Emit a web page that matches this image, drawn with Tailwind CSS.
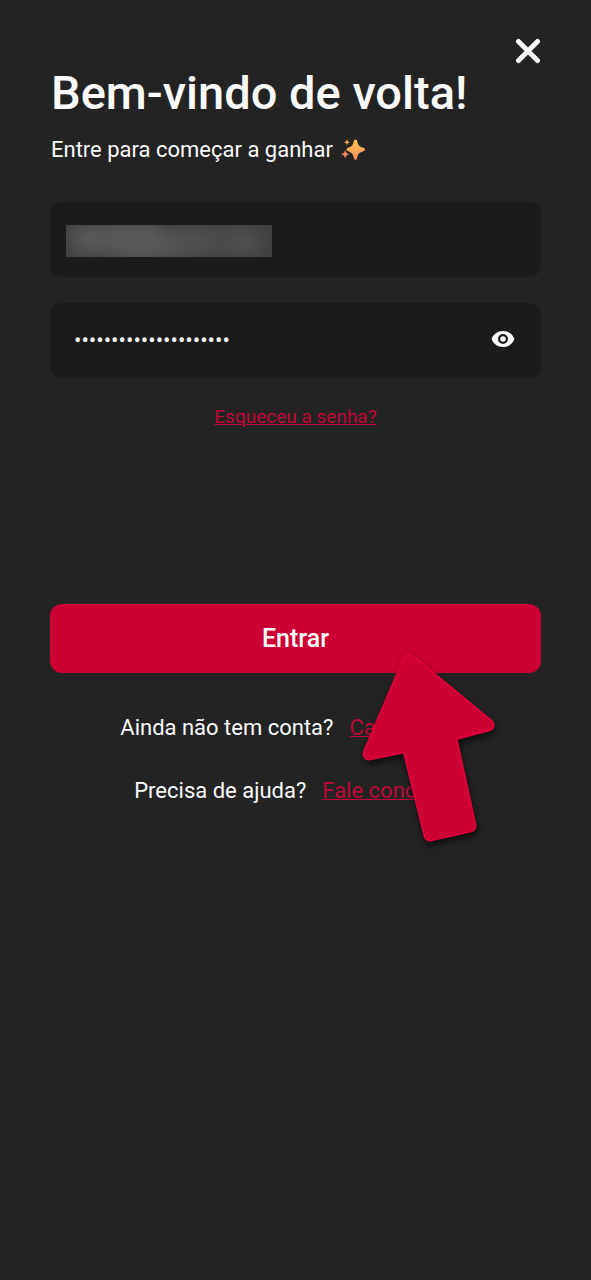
<!DOCTYPE html>
<html lang="pt-BR">
<head>
  <meta charset="UTF-8">
  <meta name="viewport" content="width=device-width, initial-scale=1.0">
  <title>Entrar</title>
  <script src="https://cdn.jsdelivr.net/npm/@tailwindcss/browser@4"></script>
</head>
<body class="bg-[#232323] text-[#fafafa] font-[Roboto,sans-serif]">
  <main class="min-h-screen px-[50px] pt-9">
    <header>
      <div class="flex justify-end">
        <button type="button" aria-label="Fechar" class="py-[2px]">
          <svg class="w-[26px] h-[26px]" viewBox="0 0 26 26" fill="none" stroke="currentColor" stroke-width="5" stroke-linecap="round">
            <path d="M3.5 3.5l19 19M22.5 3.5l-19 19" />
          </svg>
        </button>
      </div>
      <h1 class="pl-px text-[47px] leading-[54px] font-medium">Bem-vindo de volta!</h1>
      <p class="mt-[15px] pl-px flex items-center gap-2 text-[22px] leading-[30px]">
        Entre para começar a ganhar
        <svg class="w-6 h-6" viewBox="0 0 24 24" aria-hidden="true">
          <defs>
            <linearGradient id="spark" x1="0" y1="0" x2="0" y2="1">
              <stop offset="0" stop-color="#fbc94b" />
              <stop offset="1" stop-color="#f58d5c" />
            </linearGradient>
          </defs>
          <path fill="url(#spark)" d="M14.500 1.500c.9 0 1.400.7 1.700 1.800.9 4 2 5.200 5.600 6.300 1.300.4 2.100.9 2.100 1.900s-.8 1.500-2.100 1.900c-3.600 1.100-4.700 2.300-5.600 6.300-.3 1.200-.8 2.100-1.700 2.100s-1.400-.9-1.700-2.100c-.9-4-2-5.200-5.300-6.300-1.100-.4-1.900-.9-1.900-1.900s.8-1.500 1.900-1.900c3.300-1.100 4.400-2.300 5.300-6.300.3-1.100.8-1.800 1.700-1.800z" />
          <path fill="#e8a04c" d="M6 1c.6 2.200 1 2.700 3.200 3.300C7 4.900 6.600 5.400 6 7.600 5.400 5.400 5 4.900 2.800 4.300 5 3.700 5.400 3.200 6 1z" />
          <path fill="#f0875f" d="M4.200 11.800c.8 3 1.300 3.600 4.200 4.400-2.900.8-3.400 1.400-4.200 4.400-.8-3-1.300-3.600-4.200-4.400 2.900-.8 3.400-1.400 4.200-4.400z" />
        </svg>
      </p>
    </header>

    <form class="mt-[37px]">
      <div class="relative">
        <input id="email" type="email" aria-label="E-mail" class="block w-full h-[75px] rounded-xl bg-[#1b1b1b] px-6 text-[22px] outline-none" />
        <!-- hidden e-mail -->
        <div class="absolute left-4 top-[23px] w-[206px] h-8 overflow-hidden bg-[#404040]">
          <div class="absolute left-1 top-0 w-24 h-7 rounded-full bg-[#5c5a5c] blur-[9px]"></div>
          <div class="absolute left-12 top-2 w-20 h-6 rounded-full bg-[#5a575b] blur-[9px]"></div>
          <div class="absolute left-28 top-1 w-12 h-6 rounded-full bg-[#515151] blur-[9px]"></div>
          <div class="absolute right-3 top-1 w-9 h-6 rounded-full bg-[#535353] blur-[9px]"></div>
        </div>
      </div>
      <div class="relative mt-[26px]">
        <input id="password" type="password" aria-label="Senha" value="senhasenhasenhasenha1" class="block w-full h-[75px] rounded-xl bg-[#1b1b1b] pl-6 pr-16 text-[22px] outline-none" />
        <button type="button" aria-label="Mostrar senha" class="absolute right-[26px] top-6">
          <svg class="w-6 h-6" viewBox="0 0 24 24" fill="currentColor">
            <path fill-rule="evenodd" d="M12 4C6.500 4 2.200 7.300.6 12c1.600 4.700 5.900 8 11.400 8s9.800-3.300 11.400-8C21.800 7.300 17.500 4 12 4zm0 13a5 5 0 1 1 0-10 5 5 0 0 1 0 10zm0-2.200a2.800 2.800 0 1 0 0-5.600 2.800 2.800 0 0 0 0 5.600z" />
          </svg>
        </button>
      </div>
      <div class="mt-6 text-center text-[19px] leading-[30px] text-[#c00738]">
        <a href="#" class="underline decoration-1">Esqueceu a senha?</a>
      </div>

      <div class="relative mt-[172px]">
        <button type="submit" class="block w-full h-[69px] rounded-xl bg-[#cc0033] text-[25px] font-medium">Entrar</button>
        <!-- pointer arrow -->
        <svg class="absolute left-1/2 top-10 ml-[54px] w-[160px] h-[210px] z-10 pointer-events-none drop-shadow-[1px_4px_3px_rgb(0_0_0/0.6)]" viewBox="350 644 160 210" aria-hidden="true">
          <path d="M409 660L488 725L450 735L470 826L430 835L408 746L369 754Z" fill="#cc0033" stroke="#e8003a" stroke-width="13" stroke-linejoin="round" />
          <path d="M409 660L488 725L450 735L470 826L430 835L408 746L369 754Z" fill="#cc0033" stroke="#cc0033" stroke-width="10" stroke-linejoin="round" />
        </svg>
      </div>
    </form>

    <footer class="mt-10 pr-1 space-y-[33px] text-[22px] leading-[30px]">
      <p class="flex justify-center gap-4">
        Ainda não tem conta?
        <a href="#" class="underline decoration-1 text-[#c00738]">Cadastre-se</a>
      </p>
      <p class="flex justify-center gap-4">
        Precisa de ajuda?
        <a href="#" class="underline decoration-1 text-[#c00738]">Fale conosco</a>
      </p>
    </footer>
  </main>
</body>
</html>
